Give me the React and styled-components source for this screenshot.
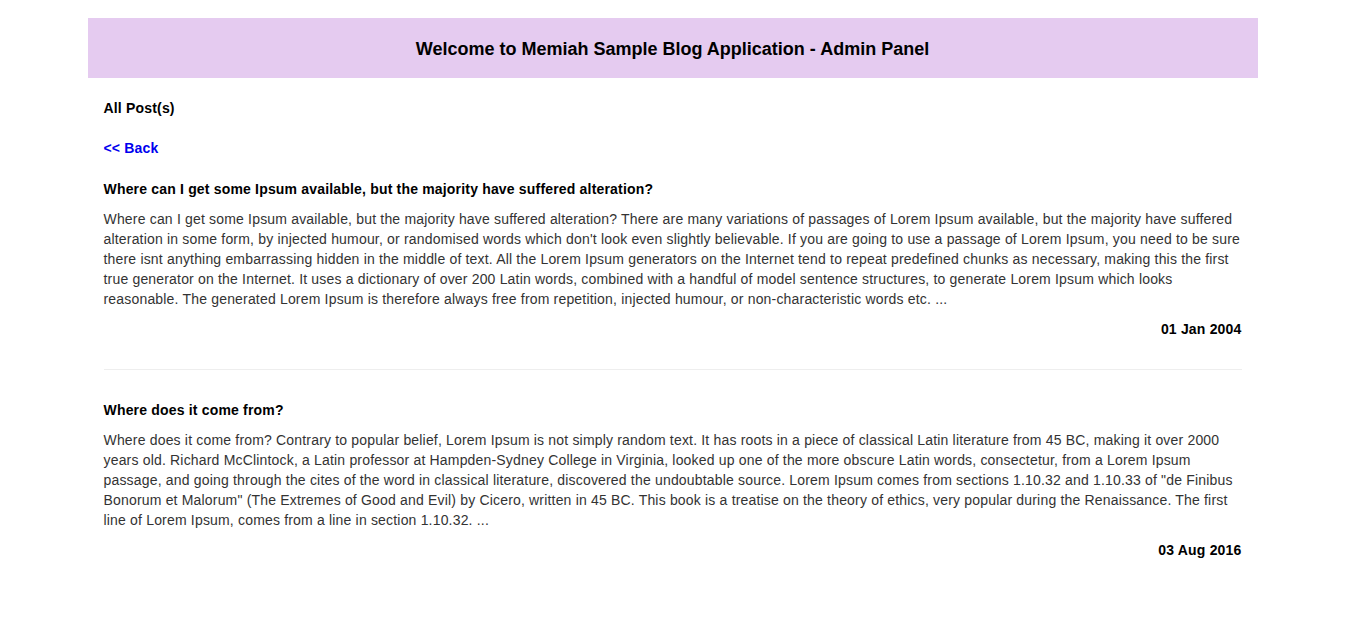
import React from "react";
import styled, { createGlobalStyle } from "styled-components";

const Global = createGlobalStyle`
  html, body { margin: 0; padding: 0; background: #fff; }
  body { font-family: "Liberation Sans", Arial, sans-serif; font-size: 14px; color: #333; }
`;

const Container = styled.div`
  width: 1170px;
  margin: 18px auto 0;
`;

const Header = styled.header`
  height: 60px;
  box-sizing: border-box;
  padding-top: 2px;
  background: #e5cbf0;
  display: flex;
  align-items: center;
  justify-content: center;
`;

const Title = styled.h1`
  margin: 0;
  font-size: 18px;
  font-weight: bold;
  color: #000;
`;

const Content = styled.main`
  padding: 20px 16px;
`;

const Heading = styled.h4`
  margin: 0;
  font-size: 14px;
  line-height: 20px;
  font-weight: bold;
  letter-spacing: 0.18px;
  color: #000;
`;

const BackLink = styled.a`
  display: inline-block;
  margin-top: 20px;
  font-size: 14px;
  line-height: 20px;
  font-weight: bold;
  letter-spacing: 0.18px;
  color: #0000ee;
  text-decoration: none;
`;

const Post = styled.article`
  margin-top: ${(p) => (p.$first ? "21px" : "30px")};
`;

const PostTitle = styled.h5`
  margin: 0;
  font-size: 14px;
  line-height: 20px;
  font-weight: bold;
  letter-spacing: 0.18px;
  color: #000;
`;

const PostBody = styled.p`
  margin: 10px 0 0;
  font-size: 14px;
  line-height: 20px;
  letter-spacing: 0.18px;
  color: #333;
`;

const PostDate = styled.div`
  margin-top: 10px;
  text-align: right;
  font-size: 14px;
  line-height: 20px;
  font-weight: bold;
  letter-spacing: 0.18px;
  color: #000;
`;

const Divider = styled.hr`
  margin: 30px 0 0;
  border: 0;
  border-top: 1px solid #eee;
`;

const posts = [
  {
    title: "Where can I get some Ipsum available, but the majority have suffered alteration?",
    body:
      "Where can I get some Ipsum available, but the majority have suffered alteration? There are many variations of passages of Lorem Ipsum available, but the majority have suffered alteration in some form, by injected humour, or randomised words which don't look even slightly believable. If you are going to use a passage of Lorem Ipsum, you need to be sure there isnt anything embarrassing hidden in the middle of text. All the Lorem Ipsum generators on the Internet tend to repeat predefined chunks as necessary, making this the first true generator on the Internet. It uses a dictionary of over 200 Latin words, combined with a handful of model sentence structures, to generate Lorem Ipsum which looks reasonable. The generated Lorem Ipsum is therefore always free from repetition, injected humour, or non-characteristic words etc. ...",
    date: "01 Jan 2004",
  },
  {
    title: "Where does it come from?",
    body:
      "Where does it come from? Contrary to popular belief, Lorem Ipsum is not simply random text. It has roots in a piece of classical Latin literature from 45 BC, making it over 2000 years old. Richard McClintock, a Latin professor at Hampden-Sydney College in Virginia, looked up one of the more obscure Latin words, consectetur, from a Lorem Ipsum passage, and going through the cites of the word in classical literature, discovered the undoubtable source. Lorem Ipsum comes from sections 1.10.32 and 1.10.33 of \"de Finibus Bonorum et Malorum\" (The Extremes of Good and Evil) by Cicero, written in 45 BC. This book is a treatise on the theory of ethics, very popular during the Renaissance. The first line of Lorem Ipsum, comes from a line in section 1.10.32. ...",
    date: "03 Aug 2016",
  },
];

export default function App() {
  return (
    <>
      <Global />
      <Container>
        <Header>
          <Title>Welcome to Memiah Sample Blog Application - Admin Panel</Title>
        </Header>
        <Content>
          <Heading>All Post(s)</Heading>
          <BackLink href="#">&lt;&lt; Back</BackLink>
          {posts.map((p, i) => (
            <React.Fragment key={i}>
              <Post $first={i === 0}>
                <PostTitle>{p.title}</PostTitle>
                <PostBody>{p.body}</PostBody>
                <PostDate>{p.date}</PostDate>
              </Post>
              {i < posts.length - 1 && <Divider />}
            </React.Fragment>
          ))}
        </Content>
      </Container>
    </>
  );
}
